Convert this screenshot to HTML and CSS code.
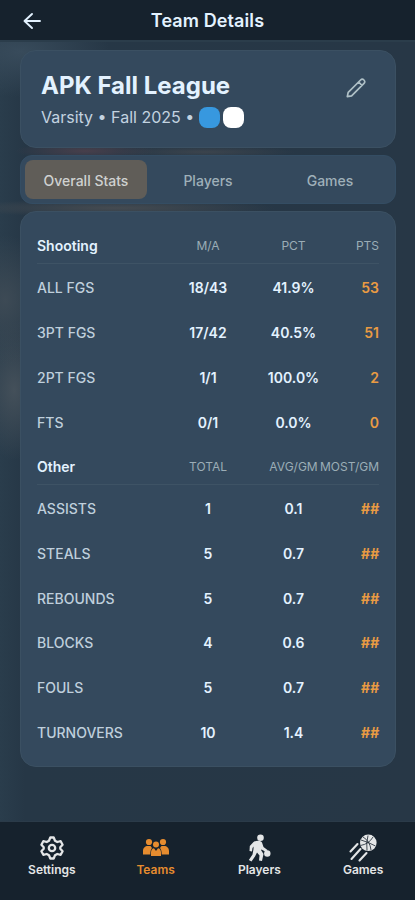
FILE: index.html
```html
<!DOCTYPE html>
<html lang="en">
<head>
    <meta charset="UTF-8">
    <meta name="viewport" content="width=device-width, initial-scale=1.0">
    <title>Team Details</title>
    <link rel="stylesheet" href="styles.css">
</head>
<body>
    <header class="topbar">
        <a class="back" href="#" aria-label="Back">
            <svg width="18" height="18" viewBox="0 0 18 18" fill="none" stroke="currentColor" stroke-width="1.9" stroke-linecap="round" stroke-linejoin="round">
                <path d="M17 9H1.500M9 2L1.500 9L9 16"/>
            </svg>
        </a>
        <h1>Team Details</h1>
    </header>

    <main>
        <section class="card team">
            <div>
                <h2>APK Fall League</h2>
                <p class="meta">Varsity • Fall 2025 • <span class="color blue"></span><span class="color white"></span></p>
            </div>
            <svg class="edit" width="20" height="20" viewBox="0 0 20 20" fill="none" stroke="currentColor" stroke-width="1.7" stroke-linejoin="round">
                <path d="M1.300 18.700L2.200 14.400L14.600 2C15.600 1 16.800 .9 17.900 2C19.100 3.200 19 4.400 18 5.400L5.600 17.800ZM12.600 4L16 7.400"/>
            </svg>
        </section>

        <nav class="tabs">
            <a class="tab active" href="#">Overall Stats</a>
            <a class="tab" href="#">Players</a>
            <a class="tab" href="#">Games</a>
        </nav>

        <section class="card stats">
            <div class="row head"><h3>Shooting</h3><span>M/A</span><span>PCT</span><span>PTS</span></div>
            <div class="row"><span>ALL FGS</span><b>18/43</b><b>41.9%</b><b>53</b></div>
            <div class="row"><span>3PT FGS</span><b>17/42</b><b>40.5%</b><b>51</b></div>
            <div class="row"><span>2PT FGS</span><b>1/1</b><b>100.0%</b><b>2</b></div>
            <div class="row"><span>FTS</span><b>0/1</b><b>0.0%</b><b>0</b></div>

            <div class="row head other"><h3>Other</h3><span>TOTAL</span><span>AVG/GM</span><span>MOST/GM</span></div>
            <div class="row"><span>ASSISTS</span><b>1</b><b>0.1</b><b class="hash">##</b></div>
            <div class="row"><span>STEALS</span><b>5</b><b>0.7</b><b class="hash">##</b></div>
            <div class="row"><span>REBOUNDS</span><b>5</b><b>0.7</b><b class="hash">##</b></div>
            <div class="row"><span>BLOCKS</span><b>4</b><b>0.6</b><b class="hash">##</b></div>
            <div class="row"><span>FOULS</span><b>5</b><b>0.7</b><b class="hash">##</b></div>
            <div class="row"><span>TURNOVERS</span><b>10</b><b>1.4</b><b class="hash">##</b></div>
        </section>
    </main>

    <nav class="bottom">
        <a href="#">
            <svg width="28" height="28" viewBox="0 0 28 28" fill="none" stroke="currentColor" stroke-width="2.300" stroke-linejoin="round">
                <path d="M12.300 3.500H15.700L17 6.700L19.300 8L22.700 7.200L24.600 10.700L22.300 13.200V14.800L24.600 17.300L22.700 20.800L19.300 20L17 21.300L15.700 24.500H12.300L11 21.300L8.700 20L5.300 20.800L3.400 17.300L5.700 14.800V13.200L3.400 10.700L5.300 7.200L8.700 8L11 6.700Z"/>
                <circle cx="14" cy="14" r="3.200"/>
            </svg>
            Settings
        </a>
        <a class="active" href="#">
            <svg width="28" height="28" viewBox="0 0 28 28" fill="currentColor">
                <circle cx="7" cy="8" r="3.100"/>
                <circle cx="21" cy="8" r="3.100"/>
                <circle cx="14" cy="10.500" r="3"/>
                <path d="M1 20.500V17C1 14 3 12 6 12H8.500L10 14C8.700 15.500 8.300 17.500 8.300 20.500ZM27 20.500V17C27 14 25 12 22 12H19.500L18 14C19.300 15.500 19.700 17.500 19.700 20.500ZM9 22V18.500C9 16 10.300 14.200 12 14.200L14 17L16 14.200C17.700 14.200 19 16 19 18.500V22Z"/>
            </svg>
            Teams
        </a>
        <a href="#">
            <svg width="28" height="28" viewBox="0 0 28 28" fill="currentColor">
                <circle cx="15.500" cy="3.800" r="3.300"/>
                <path d="M8.500 8C11.500 6.300 16 6.500 17 8.500L18.500 13L22.500 16L21 18L16.500 15.500L16 16L18.500 20L17 27L14 26.500L14.500 21.500L12 18.500L10 22.500L6.500 27.500L3.800 26L7.500 20.500L8.500 15V12.500L7.500 14L7 17.500L4.500 17L4.800 12Z"/>
                <circle cx="22.300" cy="19.500" r="3.200"/>
            </svg>
            Players
        </a>
        <a href="#">
            <svg width="28" height="28" viewBox="0 0 28 28" fill="none">
                <circle cx="19.300" cy="8.800" r="8.300" fill="currentColor"/>
                <path d="M11.500 11.500Q20 10 24 3M14 3Q21 7 22 16M12 6Q19 8 26.500 12M19 1.500Q17 9 18 16.500" stroke="#16222d" stroke-width=".8"/>
                <path d="M8.500 10L1.500 17.500M11.500 15L2.500 25M17.500 19L10.500 26.500" stroke="currentColor" stroke-width="2.100" stroke-linecap="round"/>
            </svg>
            Games
        </a>
    </nav>
</body>
</html>
```
FILE: styles.css
```css
* {
    box-sizing: border-box;
}
body {
    margin: 0;
    height: 900px;
    display: flex;
    flex-direction: column;
    overflow: hidden;
    font-family: Inter, "Liberation Sans", sans-serif;
    color: #e3f2ff;
    background-color: #263746;
    background-image:
        radial-gradient(ellipse 45px 65px at 5px 300px, #3d4a55, transparent),
        radial-gradient(ellipse 35px 70px at 14px 390px, #44505a, transparent),
        radial-gradient(ellipse 90px 45px at 20px 52px, #384b5b, transparent),
        radial-gradient(ellipse 70px 9px at 85px 151px, #483f4b, transparent),
        radial-gradient(ellipse 90px 6px at 205px 152px, #3c444d, transparent),
        radial-gradient(ellipse 160px 9px at 115px 208px, #454b51, transparent),
        linear-gradient(to right, #2a3d4c, #263746 25px, #273746);
}
h1, h2, h3, p {
    margin: 0;
}
a {
    color: inherit;
    text-decoration: none;
}
.topbar {
    height: 42px;
    flex: none;
    display: grid;
    grid-template-columns: 41px 1fr 41px;
    align-items: center;
    background-color: #16222d;
    border-bottom: 2px solid #2b3d4b;
}
.topbar h1 {
    text-align: center;
    font-size: 18px;
    font-weight: 600;
    line-height: 22px;
    letter-spacing: 0.1px;
    padding-top: 2px;
}
.back {
    display: flex;
    justify-content: flex-end;
    padding-top: 1px;
}
main {
    flex: 1;
    padding: 8px 19px 0 20px;
    display: flex;
    flex-direction: column;
    gap: 7px;
}
.card {
    background-color: #34495d;
    border: 1px solid #3b5062;
    border-radius: 16px;
}
.team {
    height: 98px;
    padding: 20px 29px 0 20px;
    display: flex;
    justify-content: space-between;
}
.team h2 {
    font-size: 24px;
    font-weight: 700;
    line-height: 30px;
}
.meta {
    display: flex;
    align-items: center;
    margin-top: 5px;
    font-size: 16px;
    line-height: 22px;
    color: #c3d3e0;
    white-space: pre;
}
.color {
    width: 21px;
    height: 21px;
    border-radius: 8px;
}
.blue {
    background-color: #3798df;
}
.white {
    margin-left: 3px;
    background-color: #fff;
}
.edit {
    margin-top: 7px;
    color: #afc0c6;
}
.tabs {
    height: 49px;
    padding: 4px;
    display: grid;
    grid-template-columns: repeat(3, 1fr);
    background-color: #34495d;
    border: 1px solid #344d63;
    border-radius: 12px;
}
.tab {
    display: flex;
    align-items: center;
    justify-content: center;
    padding-top: 1px;
    font-size: 14px;
    font-weight: 500;
    color: #9fb0b9;
    border-radius: 8px;
}
.tab.active {
    background-color: #605d58;
    color: #cfd1d0;
}
.stats {
    height: 556px;
    padding: 16px 16px 0;
}
.row {
    height: 44.8px;
    display: grid;
    grid-template-columns: minmax(0, 1.5fr) minmax(0, 1fr) minmax(0, 1fr) minmax(0, 0.5fr);
    align-items: center;
    justify-items: center;
    font-size: 14px;
    font-weight: 500;
    color: #bfcfdc;
}
.row > :first-child {
    justify-self: start;
}
.row > :last-child {
    justify-self: end;
}
.row b {
    font-weight: 600;
    color: #e3f2ff;
}
.row b:last-child {
    color: #e99b43;
}
.head {
    height: 36px;
    margin-bottom: 1.5px;
    border-bottom: 1px solid #3e5365;
    font-size: 12px;
    font-weight: 400;
    color: #9badb6;
}
.head h3 {
    font-size: 14px;
    font-weight: 600;
    color: #e3f2ff;
}
.other {
    height: 40px;
    padding-top: 4px;
}
.row .hash {
    font-size: 14px;
    font-style: italic;
    font-weight: 700;
}
.bottom {
    height: 79px;
    flex: none;
    padding-top: 12px;
    display: grid;
    grid-template-columns: repeat(4, 1fr);
    background-color: #16222d;
    border-top: 1px solid #2b3b49;
    font-size: 12px;
    font-weight: 600;
    line-height: 15px;
    color: #e4e6e7;
}
.bottom a {
    display: flex;
    flex-direction: column;
    align-items: center;
}
.bottom svg {
    width: 28px;
    height: 28px;
}
.bottom .active {
    color: #e68c2f;
}
```
